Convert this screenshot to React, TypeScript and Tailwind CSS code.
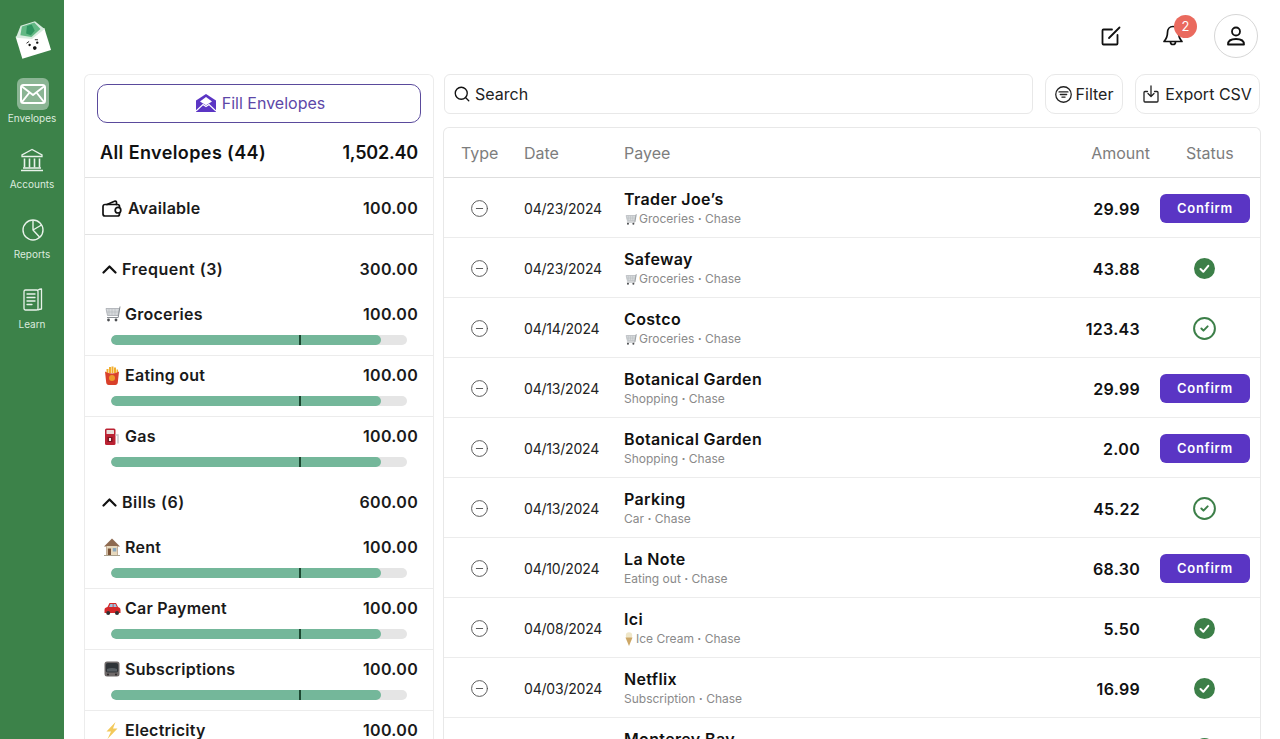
import React from "react";
import { Search, CircleMinus, CircleCheck } from "lucide-react";

const Cart = ({ s = 18 }: { s?: number }) => (
  <svg width={s} height={s} viewBox="0 0 18 18" className="shrink-0">
    <path d="M3 3.500h13.500l-1.500 7H4.500z" fill="#d6d9dc" stroke="#9da2a7" strokeWidth=".7" />
    <path d="M6 4v6M9 4v6M12 4v6M3.500 7h12.500" stroke="#aeb2b7" strokeWidth=".5" />
    <path d="M17 1.500 15.200 12.500H4" fill="none" stroke="#8a8f94" strokeWidth="1" />
    <circle cx="5.500" cy="15" r="1.400" fill="#4d4f52" />
    <circle cx="13" cy="15" r="1.400" fill="#4d4f52" />
  </svg>
);
const Fries = () => (
  <svg width="16" height="19" viewBox="0 0 16 19" className="shrink-0">
    <path d="M2.500 7V3h2v4zM5 7V1h2v6zM7.500 7V.5h2V7zM10 7V1.500h2V7zM12.500 7V3.500h1.500V7z" fill="#f2ae2e" />
    <path d="M1 5.500c3.500 2.500 10.500 2.500 14 0L13.800 16.500c-.2 1.500-1 2.500-2.500 2.500h-6.600c-1.500 0-2.300-1-2.500-2.500z" fill="#d9402a" />
    <circle cx="8" cy="12" r="3" fill="#ee9a2a" />
  </svg>
);
const Pump = () => (
  <svg width="16" height="19" viewBox="0 0 16 19" className="shrink-0">
    <rect x="1" y="1.500" width="10.500" height="16.500" rx="1.500" fill="#bb2233" />
    <rect x="2.500" y="3" width="7.500" height="4" rx=".5" fill="#e9dfdc" />
    <rect x="3.500" y="10" width="5" height="5" fill="#7c1420" />
    <rect x="5" y="11" width="2" height="3" fill="#f4eaea" />
    <path d="M11.500 8h2.500v8.500" fill="none" stroke="#c4c7cb" strokeWidth="1.400" />
  </svg>
);
const House = () => (
  <svg width="16" height="18" viewBox="0 0 16 18" className="shrink-0">
    <path d="M8 .5 0 8.500h2.200V17h11.600V8.500H16z" fill="#8e6a50" />
    <rect x="2.500" y="8" width="11" height="9" fill="#e6d8bd" />
    <rect x="3.800" y="10.500" width="3.200" height="6.500" fill="#7a5236" />
    <rect x="8.800" y="10" width="3.500" height="3.500" fill="#8ca9bd" />
    <path d="M0 17.500h16" stroke="#a9a18e" strokeWidth="1" />
  </svg>
);
const Car = () => (
  <svg width="17" height="16" viewBox="0 0 17 16" className="shrink-0">
    <path d="M.5 10c0-2 1-2.500 3-3l2-4h6.500l2 4c1.500.5 2.500 1 2.500 3v3H.5z" fill="#d4282a" />
    <path d="M6.400 4h2.300v3H5zM9.500 4h2l1.300 3H9.500z" fill="#9bc6e2" />
    <circle cx="4.200" cy="13" r="2" fill="#2f2f31" />
    <circle cx="13" cy="13" r="2" fill="#2f2f31" />
  </svg>
);
const Tv = () => (
  <svg width="16" height="16" viewBox="0 0 16 16" className="shrink-0">
    <rect x=".5" y=".5" width="15" height="15" rx="2.500" fill="#6f6a6a" />
    <rect x="1.800" y="2" width="12.400" height="9.500" rx="2" fill="#2f3438" />
    <path d="M3 8c3-1.500 7-1.500 10 0v2.500H3z" fill="#565d62" />
    <circle cx="4" cy="13.500" r=".9" fill="#221f20" />
    <circle cx="12" cy="13.500" r=".9" fill="#221f20" />
  </svg>
);
const Bolt = () => (
  <svg width="16" height="17" viewBox="0 0 16 17" className="shrink-0">
    <path d="M11.500 0 2.500 9.500H7L3.500 17 13.500 6.500H9z" fill="#f3c95a" />
  </svg>
);
const Cone = () => (
  <svg width="10" height="14" viewBox="0 0 10 14" className="shrink-0">
    <circle cx="5" cy="3.500" r="3.200" fill="#efe6c8" />
    <path d="M1.500 5.500h7L5 14z" fill="#cda766" />
  </svg>
);
const SolidCheck = () => (
  <svg width="21" height="21" viewBox="0 0 21 21" className="mr-px">
    <circle cx="10.500" cy="10.500" r="10.500" fill="#3c7f48" />
    <path d="M6.500 11l2.800 2.800 5-6" fill="none" stroke="#fff" strokeWidth="2" strokeLinecap="round" strokeLinejoin="round" />
  </svg>
);
const Logo = () => (
  <svg width="38" height="40" viewBox="0 0 38 40">
    <g transform="rotate(-17 19 20)">
      <rect x="4" y="13" width="30" height="23" fill="#fff" />
      <path d="M4 14 12 4h15l7 10-15 6z" fill="#d8ecdf" />
      <path d="M9 13 13 5h13l4 8-11 5z" fill="#62b884" />
      <path d="M15 13l3-7h5l1 7-5 3z" fill="#2f9560" />
      <circle cx="15" cy="25" r="1.200" fill="#111" />
      <circle cx="23" cy="25" r="1.200" fill="#111" />
      <circle cx="19" cy="29.500" r="1.800" fill="#111" />
      <path d="M12.500 22.500l3-1M21.500 21.500l3 1" stroke="#111" strokeWidth=".8" />
    </g>
  </svg>
);
const MailIcon = () => (
  <svg width="26" height="20" viewBox="0 0 26 20" fill="none" stroke="#fff" strokeWidth="2" strokeLinejoin="round">
    <rect x="1" y="1" width="24" height="18" rx="2.500" />
    <path d="M2 2.500 13 11 24 2.500M2 18l7.500-9.500M24 18l-7.500-9.500" />
  </svg>
);
const BankIcon = () => (
  <svg width="24" height="24" viewBox="0 0 24 24" fill="none" stroke="#e8f2ea" strokeWidth="1.300">
    <path d="M12 1.500 2 7v1.500h20V7z" />
    <path d="M4.500 10.500v9M9.500 10.500v9M14.500 10.500v9M19.500 10.500v9" strokeWidth="1.600" />
    <path d="M3 20h18M1 22.500h22" strokeWidth="1.400" />
  </svg>
);
const PieIcon = () => (
  <svg width="22" height="22" viewBox="0 0 22 22" fill="none" stroke="#e8f2ea" strokeWidth="1.400" strokeLinejoin="round">
    <circle cx="11" cy="11" r="10" />
    <path d="M11 1v10l8.500-5M11 11l6.500 7" />
  </svg>
);
const BookIcon = () => (
  <svg width="20" height="24" viewBox="0 0 20 24" fill="none" stroke="#e8f2ea" strokeWidth="1.300" strokeLinejoin="round" strokeLinecap="round">
    <rect x="1" y="2" width="14" height="20" rx="1.500" />
    <path d="M15 2c1-.6 2.500-1 3.500-1v20c-1 0-2.500.4-3.500 1" />
    <path d="M4 6h8M4 9.500h8M4 13h8M4 16.500h5" />
  </svg>
);
const OpenMail = () => (
  <svg width="20" height="18" viewBox="0 0 20 18">
    <path d="M10 0 0 6.500V18h20V6.500z" fill="#5b35c4" />
    <path d="M4 7.500 10 3l6 4.500-6 3.800z" fill="#fff" />
    <path d="M0 17l7-6.500 3 2 3-2 7 6.500" fill="none" stroke="#fff" strokeWidth="1.200" />
  </svg>
);
const Compose = () => (
  <svg width="20" height="20" viewBox="0 0 20 20" fill="none" stroke="#111" strokeWidth="1.800" strokeLinejoin="round" strokeLinecap="round">
    <path d="M11 3.500H2.500a1 1 0 0 0-1 1V17.500a1 1 0 0 0 1 1H15.500a1 1 0 0 0 1-1V9" />
    <path d="M8 12 18.500 1.500" />
  </svg>
);
const Bell = () => (
  <svg width="22" height="22" viewBox="0 0 22 22" fill="none" stroke="#111" strokeWidth="1.700" strokeLinejoin="round">
    <path d="M11 1.500c-3.500 0-5.500 2.500-5.500 6 0 5-1.300 6.500-3.500 9h18c-2.200-2.500-3.500-4-3.500-9 0-3.500-2-6-5.500-6z" />
    <path d="M8.500 17a2.500 2.500 0 0 0 5 0" />
  </svg>
);
const Person = () => (
  <svg width="20" height="20" viewBox="0 0 20 20" fill="none" stroke="#111" strokeWidth="1.800" strokeLinejoin="round">
    <circle cx="10" cy="5.500" r="4" />
    <path d="M2 18.500c0-3.500 2.500-5.500 8-5.500s8 2 8 5.500z" />
  </svg>
);
const FilterCircle = () => (
  <svg width="17" height="17" viewBox="0 0 16 16" fill="none" stroke="#222" strokeWidth="1.200" strokeLinecap="round">
    <circle cx="8" cy="8" r="7.300" />
    <path d="M3.800 5.600h8.400M5 8h6M6.500 10.400h3" />
  </svg>
);
const ExportIcon = () => (
  <svg width="16" height="18" viewBox="0 0 16 18" fill="none" stroke="#222" strokeWidth="1.300" strokeLinecap="round" strokeLinejoin="round">
    <path d="M4.500 6.500H2a1 1 0 0 0-1 1V16a1 1 0 0 0 1 1h12a1 1 0 0 0 1-1V7.500a1 1 0 0 0-1-1h-2.500" />
    <path d="M8 1v10M5 8.500 8 11.500l3-3" />
  </svg>
);
const WalletIcon = () => (
  <svg width="20" height="17" viewBox="0 0 20 17" fill="none" stroke="#111" strokeWidth="1.700" strokeLinejoin="round" strokeLinecap="round" className="shrink-0">
    <path d="M5 4.500 12.500 1.200c1-.4 2 .2 2 1.300v2" />
    <path d="M17.500 7.200V6.500a2 2 0 0 0-2-2H3a2 2 0 0 0-2 2V14a2 2 0 0 0 2 2h12.500a2 2 0 0 0 2-2v-.8" />
    <circle cx="16" cy="10.200" r="2.800" />
  </svg>
);
const Chevron = () => (
  <svg width="15" height="9" viewBox="0 0 15 9" fill="none" stroke="#111" strokeWidth="2.200" strokeLinecap="round" strokeLinejoin="round" className="shrink-0">
    <path d="M1.500 7.500 7.500 1.500l6 6" />
  </svg>
);

const NavItem = ({ icon, label, box, h, gap }: { icon: React.ReactNode; label: string; box?: boolean; h: number; gap?: boolean }) => (
  <div style={{ height: h }} className="flex flex-col items-center">
    <div className={box ? "w-8 h-8 ml-px rounded-md bg-[#8bb594] flex items-center justify-center" : "w-8 h-[26px] ml-px flex items-center justify-center"}>{icon}</div>
    <span className={gap ? "mt-[5px] text-[10px] leading-3 text-[#dcebdf]" : "mt-[2px] text-[10px] leading-3 text-[#dcebdf]"}>{label}</span>
  </div>
);

const Bar = () => (
  <div className="mx-[26px] h-[10px] rounded-full bg-[#e5e5e5] relative overflow-hidden mt-[10px]">
    <div className="h-full w-[270px] rounded-full bg-[#74b79a]" />
    <div className="absolute left-[188px] top-0 h-full w-[2px] bg-[#1d4a33]" />
  </div>
);

const Env = ({ icon, name, last }: { icon: React.ReactNode; name: string; last?: boolean }) => (
  <div className={last ? "h-[61px] pt-[8px]" : "h-[61px] pt-[8px] border-b border-[#ececec]"}>
    <div className="flex items-center justify-between pl-[18px] pr-[15px] h-[22px]">
      <div className="flex items-center gap-[4px] text-[16px] font-semibold tracking-[0.25px] text-[#1a1a1a]">
        <span className="w-[18px] flex justify-center">{icon}</span>
        {name}
      </div>
      <span className="text-[16px] font-semibold tracking-[0.3px] text-[#1a1a1a]">100.00</span>
    </div>
    <Bar />
  </div>
);

const Group = ({ name, amount }: { name: string; amount: string }) => (
  <div className="flex items-center justify-between pl-[17px] pr-[15px] h-[24px]">
    <div className="flex items-center gap-[5px] text-[16px] font-semibold tracking-[0.5px] text-[#1a1a1a]">
      <Chevron />
      {name}
    </div>
    <span className="text-[16px] font-semibold tracking-[0.3px] text-[#1a1a1a]">{amount}</span>
  </div>
);

type Row = { payee: string; icon?: React.ReactNode; cat: string; date: string; amt: string; st: "c" | "o" | "s" };
const rows: Row[] = [
  { payee: "Trader Joe’s", icon: <Cart s={13} />, cat: "Groceries", date: "04/23/2024", amt: "29.99", st: "c" },
  { payee: "Safeway", icon: <Cart s={13} />, cat: "Groceries", date: "04/23/2024", amt: "43.88", st: "s" },
  { payee: "Costco", icon: <Cart s={13} />, cat: "Groceries", date: "04/14/2024", amt: "123.43", st: "o" },
  { payee: "Botanical Garden", cat: "Shopping", date: "04/13/2024", amt: "29.99", st: "c" },
  { payee: "Botanical Garden", cat: "Shopping", date: "04/13/2024", amt: "2.00", st: "c" },
  { payee: "Parking", cat: "Car", date: "04/13/2024", amt: "45.22", st: "o" },
  { payee: "La Note", cat: "Eating out", date: "04/10/2024", amt: "68.30", st: "c" },
  { payee: "Ici", icon: <Cone />, cat: "Ice Cream", date: "04/08/2024", amt: "5.50", st: "s" },
  { payee: "Netflix", cat: "Subscription", date: "04/03/2024", amt: "16.99", st: "s" },
  { payee: "Monterey Bay", cat: "Travel", date: "04/01/2024", amt: "80.00", st: "s" },
];

const Status = ({ st }: { st: Row["st"] }) =>
  st === "c" ? (
    <button className="w-[90px] h-[29px] rounded-md bg-[#5a35c4] text-white text-[13px] font-semibold tracking-[0.7px]">Confirm</button>
  ) : st === "s" ? (
    <SolidCheck />
  ) : (
    <span className="mr-px flex"><CircleCheck size={25} strokeWidth={1.9} color="#3c7f48" /></span>
  );

export default function App() {
  return (
    <div className="flex h-[739px] overflow-hidden bg-white font-['Inter',sans-serif] text-[#111]">
      <aside className="w-[64px] shrink-0 bg-[#3c8249] flex flex-col items-center pt-[19px]">
        <Logo />
        <div className="mt-[19px] flex flex-col items-center w-full">
          <NavItem h={69} box icon={<MailIcon />} label="Envelopes" />
          <NavItem h={70} gap icon={<BankIcon />} label="Accounts" />
          <NavItem h={70} gap icon={<PieIcon />} label="Reports" />
          <NavItem h={60} gap icon={<BookIcon />} label="Learn" />
        </div>
      </aside>

      <main className="flex-1 min-w-0 flex flex-col">
        <header className="h-[74px] shrink-0 flex items-center justify-end pr-[22px] pb-[2px]">
          <div className="mr-[41px] flex"><Compose /></div>
          <div className="relative mr-[30px] flex">
            <Bell />
            <span className="absolute -top-[10px] left-[12px] w-[23px] h-[23px] rounded-full bg-[#ea6a5e] text-white text-[13px] flex items-center justify-center">2</span>
          </div>
          <div className="w-[44px] h-[44px] rounded-full border border-[#d6d6d6] flex items-center justify-center"><Person /></div>
        </header>

        <div className="flex-1 min-h-0 flex pl-5 pr-[19px] gap-[10px]">
          <section className="w-[350px] shrink-0 border border-[#ececec] border-b-0 rounded-t-md overflow-hidden">
            <div className="pt-[9px] px-3">
              <button className="w-full h-[39px] pb-[2px] pl-[3px] rounded-[10px] border border-[#5a4a9c] flex items-center justify-center gap-[6px] text-[16px] text-[#5d47a8]">
                <OpenMail /> Fill Envelopes
              </button>
            </div>
            <div className="h-[55px] pt-[5px] flex items-center justify-between pl-[15px] pr-[15px] border-b border-[#e2e2e2] text-[18px] font-semibold text-[#111]">
              <span className="tracking-[0.4px]">All Envelopes (44)</span>
              <span className="tracking-[-0.2px]">1,502.40</span>
            </div>
            <div className="h-[57px] pt-[4px] flex items-center justify-between pl-[17px] pr-[15px] border-b border-[#e2e2e2] text-[16px] font-semibold text-[#1a1a1a]">
              <span className="flex items-center gap-[6px] tracking-[0.25px]"><WalletIcon />Available</span>
              <span className="tracking-[0.3px]">100.00</span>
            </div>
            <div className="pt-[22px]"><Group name="Frequent (3)" amount="300.00" /></div>
            <div className="pt-[14px]">
              <Env icon={<Cart />} name="Groceries" />
              <Env icon={<Fries />} name="Eating out" />
              <Env icon={<Pump />} name="Gas" last />
            </div>
            <div className="pt-[12px]"><Group name="Bills (6)" amount="600.00" /></div>
            <div className="pt-[14px]">
              <Env icon={<House />} name="Rent" />
              <Env icon={<Car />} name="Car Payment" />
              <Env icon={<Tv />} name="Subscriptions" />
              <Env icon={<Bolt />} name="Electricity" last />
            </div>
          </section>

          <section className="flex-1 min-w-0 flex flex-col">
            <div className="flex h-[40px] shrink-0">
              <div className="w-[589px] rounded-md border border-[#e8e8e8] flex items-center pl-2 gap-[4px] text-[16px] text-[#222]">
                <Search size={18} strokeWidth={1.8} color="#111" /> Search
              </div>
              <button className="ml-3 w-[78px] rounded-[10px] border border-[#e8e8e8] flex items-center justify-center gap-[4px] text-[16px] text-[#222]">
                <FilterCircle /> Filter
              </button>
              <button className="ml-3 w-[125px] rounded-[10px] border border-[#e8e8e8] flex items-center justify-center gap-[6px] text-[16px] text-[#222]">
                <ExportIcon /> Export CSV
              </button>
            </div>
            <div className="mt-[13px] -ml-px flex-1 min-h-0 w-[818px] border border-[#e8e8e8] border-b-0 rounded-t-md overflow-hidden">
              <div className="h-[50px] pt-px flex items-center border-b border-[#dedede] text-[16px] text-[#7d7d7d]">
                <span className="w-[80px] pl-[17px]">Type</span>
                <span className="w-[100px]">Date</span>
                <span className="flex-1">Payee</span>
                <span className="mr-[36px]">Amount</span>
                <span className="w-[74px]">Status</span>
              </div>
              {rows.map((r, i) => (
                <div key={i} className="h-[60px] flex items-center border-b border-[#ececec]">
                  <span className="w-[80px] pl-[26px] pt-[2px]"><CircleMinus size={19} strokeWidth={1.2} color="#555" /></span>
                  <span className="w-[100px] pt-[2px] text-[14px] tracking-[-0.2px] text-[#222]">{r.date}</span>
                  <div className="flex-1">
                    <div className="text-[16px] leading-[22px] font-semibold tracking-[0.35px] text-[#111]">{r.payee}</div>
                    <div className="mt-px text-[12px] leading-[16px] text-[#8a8a8a] flex items-center gap-[2px]">
                      {r.icon}
                      <span>{r.cat} <span className="font-bold">·</span> Chase</span>
                    </div>
                  </div>
                  <span className="pt-[2px] text-[16px] font-semibold tracking-[0.3px] text-[#111]">{r.amt}</span>
                  <div className="w-[110px] pl-[20px] pt-[2px] flex justify-center">
                    <Status st={r.st} />
                  </div>
                  <span className="w-[10px]" />
                </div>
              ))}
            </div>
          </section>
        </div>
      </main>
    </div>
  );
}
